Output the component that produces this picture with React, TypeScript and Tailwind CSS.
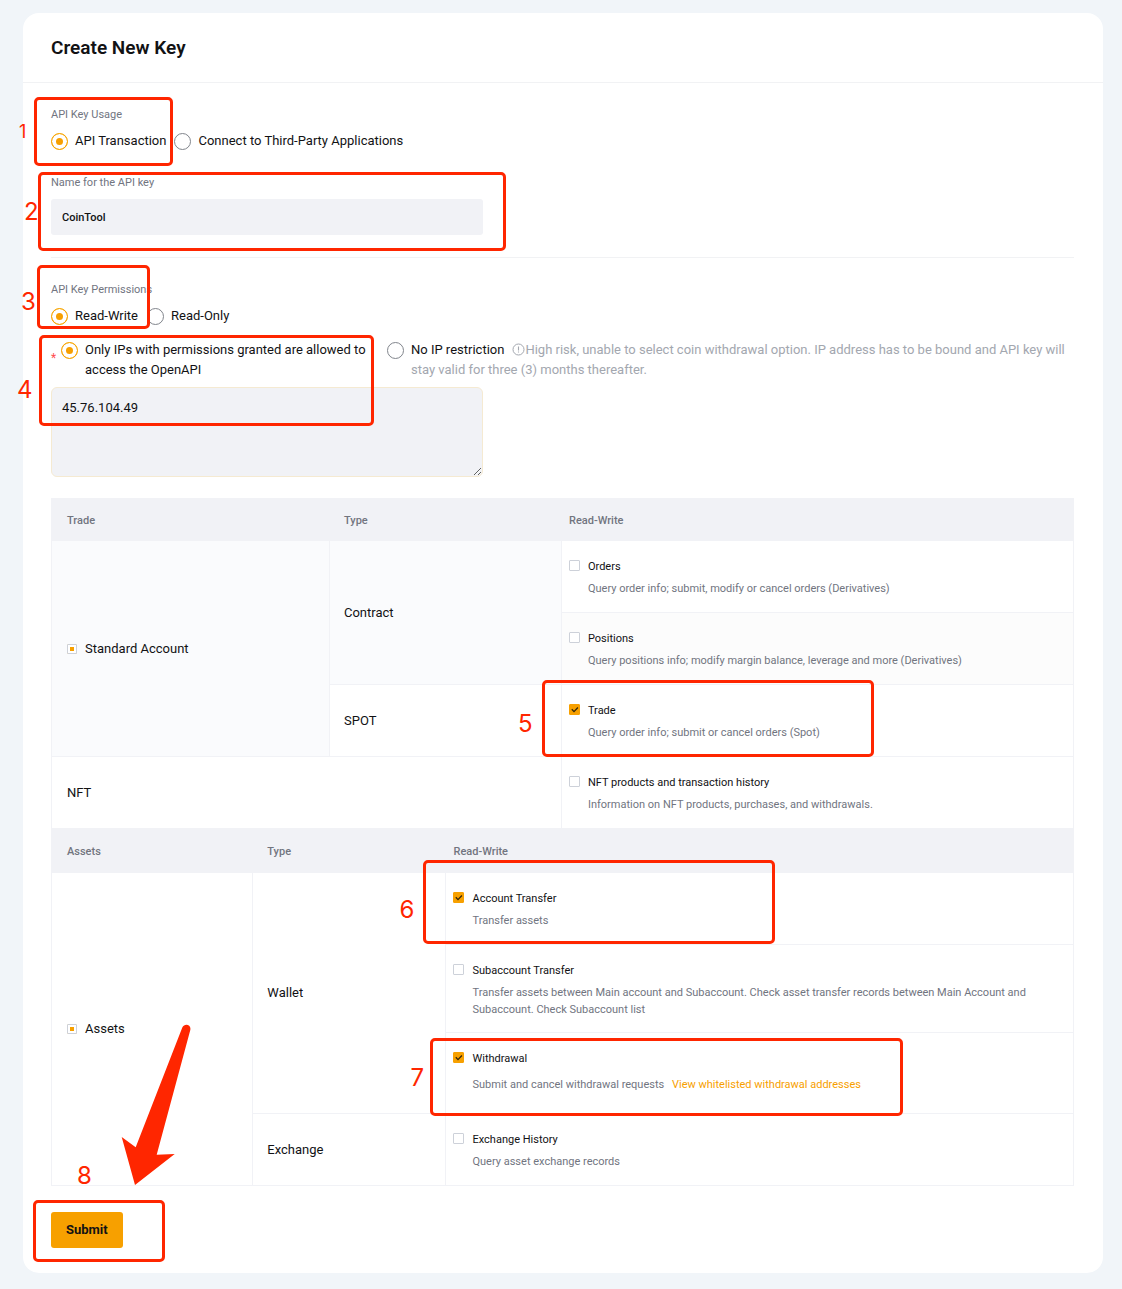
import { useEffect, useRef, type ReactNode } from "react";

function Mark({ n, box, digit, small }: { n: number; box: string; digit: string; small?: boolean }) {
  return (
    <div aria-hidden="true" className="pointer-events-none">
      <div className={`absolute z-10 rounded-[5px] border-3 border-[#ff2600] ${box}`} />
      <span
        className={`absolute z-10 font-['Inter',sans-serif] leading-6 text-[#ff2600] ${small ? "text-lg" : "text-2xl"} ${digit}`}
      >
        {n}
      </span>
    </div>
  );
}

function Radio({ name, checked, children }: { name: string; checked?: boolean; children: ReactNode }) {
  return (
    <label className="flex items-start gap-[7px] text-[13px] leading-5 text-[#121214]">
      <input
        type="radio"
        name={name}
        defaultChecked={checked}
        className="mt-[2px] size-[17px] shrink-0 appearance-none rounded-full border border-[#81858c] bg-white checked:border-[#f7a600] checked:bg-[#f79f00] checked:shadow-[inset_0_0_0_4px_#fff]"
      />
      <span>{children}</span>
    </label>
  );
}

function Tick({ id, checked }: { id: string; checked?: boolean }) {
  return (
    <span className="relative block size-[11px] shrink-0">
      <input
        id={id}
        type="checkbox"
        defaultChecked={checked}
        className="peer block size-[11px] appearance-none rounded-[1px] border border-[#cdd1d9] bg-white checked:border-[#f7a000] checked:bg-[#f7a000]"
      />
      <svg
        viewBox="0 0 11 11"
        className="pointer-events-none absolute inset-0 hidden size-[11px] peer-checked:block"
        fill="none"
        stroke="#33260a"
        strokeWidth="1.3"
      >
        <path d="M2.8 5.3 5 7.6 8.9 3.5" />
      </svg>
    </span>
  );
}

function Group({ label }: { label: string }) {
  const ref = useRef<HTMLInputElement>(null);
  useEffect(() => {
    if (ref.current) ref.current.indeterminate = true;
  }, []);
  return (
    <label className="flex items-center gap-2">
      <input
        ref={ref}
        type="checkbox"
        className="size-[10px] appearance-none rounded-[1px] border border-[#cdd1d9] bg-white indeterminate:bg-[#f7a000] indeterminate:shadow-[inset_0_0_0_2px_#fff]"
      />
      {label}
    </label>
  );
}

function Permission({
  id,
  title,
  checked,
  spaced,
  children,
  mark,
}: {
  id: string;
  title: string;
  checked?: boolean;
  spaced?: boolean;
  children: ReactNode;
  mark?: ReactNode;
}) {
  return (
    <div className={`relative flex gap-2 text-[11px] ${spaced ? "pb-[6px]" : ""}`}>
      <div className="pt-1">
        <Tick id={id} checked={checked} />
      </div>
      <div className="min-w-0 pt-px pr-10">
        <label htmlFor={id} className="block leading-5 text-[#121214]">
          {title}
        </label>
        <p className={`leading-[17px] text-[#71757f] ${spaced ? "mt-[7px]" : "mt-[3px]"}`}>{children}</p>
      </div>
      {mark}
    </div>
  );
}

const th = "pt-[3px] text-left text-[11px] font-medium text-[#71757f]";
const cell = "border-r border-b border-[#f1f2f6]";
const name = "text-[13px] leading-5 text-[#121214]";

export default function App() {
  return (
    <div className="min-h-screen bg-[#f1f5f9] pt-[13px] pr-[19px] pb-4 pl-[23px] font-['Roboto','Liberation_Sans',sans-serif]">
      <main className="rounded-2xl bg-white">
        <header className="flex h-[70px] items-center border-b border-[#f1f2f4] px-7 pt-[2px]">
          <h1 className="text-[19px] font-semibold text-[#121214]">Create New Key</h1>
        </header>

        <form className="pr-[29px] pb-[25px] pl-7" onSubmit={(e) => e.preventDefault()}>
          <fieldset className="relative pt-6">
            <legend className="contents">
              <span className="block text-[11px] leading-4 text-[#71757f]">API Key Usage</span>
            </legend>
            <div className="mt-2 flex gap-2">
              <Radio name="usage" checked>
                API Transaction
              </Radio>
              <Radio name="usage">Connect to Third-Party Applications</Radio>
            </div>
            <Mark n={1} small box="-left-[17px] top-[14px] h-[69px] w-[139px]" digit="-left-8 top-[37px]" />
          </fieldset>

          <div className="relative border-b border-[#f1f2f4] pt-6 pb-[22px]">
            <label htmlFor="key-name" className="block text-[11px] leading-4 text-[#71757f]">
              Name for the API key
            </label>
            <input
              id="key-name"
              defaultValue="CoinTool"
              className="mt-2 block h-9 w-[432px] max-w-full rounded-[3px] bg-[#f1f2f6] px-[11px] text-[11px] font-medium text-[#121214] outline-none"
            />
            <Mark n={2} box="-left-[13px] top-[21px] h-[79px] w-[468px]" digit="-left-[27px] top-[49px]" />
          </div>

          <fieldset className="relative pt-6">
            <legend className="contents">
              <span className="block text-[11px] leading-4 text-[#71757f]">API Key Permissions</span>
            </legend>
            <div className="mt-2 flex gap-[9px]">
              <Radio name="access" checked>
                Read-Write
              </Radio>
              <Radio name="access">Read-Only</Radio>
            </div>
            <Mark n={3} box="-left-[14px] top-[7px] h-[64px] w-[113px]" digit="-left-[30px] top-8" />
          </fieldset>

          <div role="radiogroup" aria-label="IP restriction" className="relative pt-[14px]">
            <div className="flex items-start">
              <span className="w-[10px] shrink-0 pt-2 text-xs leading-5 text-[#ff4d4f]">*</span>
              <div className="w-[326px] shrink-0 pr-3">
                <Radio name="ip" checked>
                  Only IPs with permissions granted are allowed to access the OpenAPI
                </Radio>
              </div>
              <Radio name="ip">
                No IP restriction
                <span className="ml-2 text-[#a3a7af]">
                  <svg viewBox="0 0 13 13" className="inline size-[13px] align-[-2px]" fill="none" stroke="currentColor">
                    <circle cx="6.5" cy="6.5" r="5.5" />
                    <path d="M6.5 3.5v4M6.5 8.5v1" strokeWidth="1.1" />
                  </svg>
                  High risk, unable to select coin withdrawal option. IP address has to be bound and API key will stay
                  valid for three (3) months thereafter.
                </span>
              </Radio>
            </div>
            <textarea
              aria-label="Permitted IP addresses"
              defaultValue="45.76.104.49"
              className="mt-[7px] block h-[90px] w-[432px] max-w-full rounded-md border border-[#f5ead2] bg-[#f1f2f6] p-[10px] text-[13px] leading-5 text-[#121214] outline-none"
            />
            <Mark n={4} box="-left-[12px] top-[9px] h-[91px] w-[335px]" digit="-left-[34px] top-[52px]" />
          </div>

          <table className="mt-[21px] w-full table-fixed border-separate border-spacing-0 border-l border-[#f1f2f6]">
            <colgroup>
              <col className="w-[27.2%]" />
              <col className="w-[22.7%]" />
              <col />
            </colgroup>
            <thead className="bg-[#f1f2f6]">
              <tr className="h-[43px]">
                <th className={`${th} pl-[15px]`}>Trade</th>
                <th className={`${th} pl-[14px]`}>Type</th>
                <th className={`${th} pl-[7px]`}>Read-Write</th>
              </tr>
            </thead>
            <tbody>
              <tr>
                <td rowSpan={3} className={`${cell} ${name} bg-[#fafbfd] pl-[15px]`}>
                  <Group label="Standard Account" />
                </td>
                <td rowSpan={2} className={`${cell} ${name} bg-[#fafbfd] pl-[14px]`}>
                  Contract
                </td>
                <td className={`${cell} h-[72px] pl-[7px]`}>
                  <Permission id="orders" title="Orders">
                    Query order info; submit, modify or cancel orders (Derivatives)
                  </Permission>
                </td>
              </tr>
              <tr>
                <td className={`${cell} h-[72px] bg-[#fcfcfc] pl-[7px]`}>
                  <Permission id="positions" title="Positions">
                    Query positions info; modify margin balance, leverage and more (Derivatives)
                  </Permission>
                </td>
              </tr>
              <tr>
                <td className={`${cell} ${name} pl-[14px]`}>SPOT</td>
                <td className={`${cell} h-[72px] pl-[7px]`}>
                  <Permission
                    id="trade"
                    title="Trade"
                    checked
                    mark={<Mark n={5} box="-left-[27px] -top-[20px] h-[77px] w-[332px]" digit="-left-[51px] top-3" />}
                  >
                    Query order info; submit or cancel orders (Spot)
                  </Permission>
                </td>
              </tr>
              <tr>
                <td colSpan={2} className={`${cell} ${name} pl-[15px]`}>
                  NFT
                </td>
                <td className={`${cell} h-[72px] pl-[7px]`}>
                  <Permission id="nft" title="NFT products and transaction history">
                    Information on NFT products, purchases, and withdrawals.
                  </Permission>
                </td>
              </tr>
            </tbody>
          </table>

          <div className="relative">
            <table className="w-full table-fixed border-separate border-spacing-0 border-l border-[#f1f2f6]">
              <colgroup>
                <col className="w-[19.7%]" />
                <col className="w-[18.9%]" />
                <col />
              </colgroup>
              <thead className="bg-[#f1f2f6]">
                <tr className="h-[44px]">
                  <th className={`${th} pl-[15px]`}>Assets</th>
                  <th className={`${th} pl-[14px]`}>Type</th>
                  <th className={`${th} pl-[7px]`}>Read-Write</th>
                </tr>
              </thead>
              <tbody>
                <tr>
                  <td rowSpan={4} className={`${cell} ${name} pl-[15px]`}>
                    <Group label="Assets" />
                  </td>
                  <td rowSpan={3} className={`${cell} ${name} pl-[14px]`}>
                    Wallet
                  </td>
                  <td className={`${cell} h-[72px] pl-[7px]`}>
                    <Permission
                      id="account-transfer"
                      title="Account Transfer"
                      checked
                      mark={<Mark n={6} box="-left-[30px] -top-[28px] h-[84px] w-[352px]" digit="-left-[54px] top-[10px]" />}
                    >
                      Transfer assets
                    </Permission>
                  </td>
                </tr>
                <tr>
                  <td className={`${cell} h-[88px] pl-[7px]`}>
                    <Permission id="subaccount-transfer" title="Subaccount Transfer">
                      Transfer assets between Main account and Subaccount. Check asset transfer records between Main
                      Account and Subaccount. Check Subaccount list
                    </Permission>
                  </td>
                </tr>
                <tr>
                  <td className={`${cell} h-[81px] pl-[7px]`}>
                    <Permission
                      id="withdrawal"
                      title="Withdrawal"
                      checked
                      spaced
                      mark={<Mark n={7} box="-left-[23px] -top-[10px] h-[78px] w-[473px]" digit="-left-[43px] top-[18px]" />}
                    >
                      Submit and cancel withdrawal requests{" "}
                      <a href="#whitelist" className="ml-[5px] text-[#f7a000]">
                        View whitelisted withdrawal addresses
                      </a>
                    </Permission>
                  </td>
                </tr>
                <tr>
                  <td className={`${cell} ${name} pl-[14px]`}>Exchange</td>
                  <td className={`${cell} h-[72px] pl-[7px]`}>
                    <Permission id="exchange-history" title="Exchange History">
                      Query asset exchange records
                    </Permission>
                  </td>
                </tr>
              </tbody>
            </table>
            <svg
              aria-hidden="true"
              viewBox="0 0 72 162"
              className="pointer-events-none absolute bottom-0 left-[70px] z-10 h-[162px] w-[72px]"
              fill="#ff2600"
            >
              <path d="M14 161 0.7 113 14.7 123.3 61.3 3.5C63.5-1 70.5 0.5 69.3 6L35.7 130.7 53.7 130Z" />
            </svg>
          </div>

          <div className="relative mt-[26px]">
            <button
              type="submit"
              className="block h-9 rounded-[3px] bg-[#f7a000] px-[15px] text-[13px] font-bold text-[#121214]"
            >
              Submit
            </button>
            <Mark n={8} box="-left-[18px] -top-[12px] h-[62px] w-[132px]" digit="left-[26px] -top-[48px]" />
          </div>
        </form>
      </main>
    </div>
  );
}
